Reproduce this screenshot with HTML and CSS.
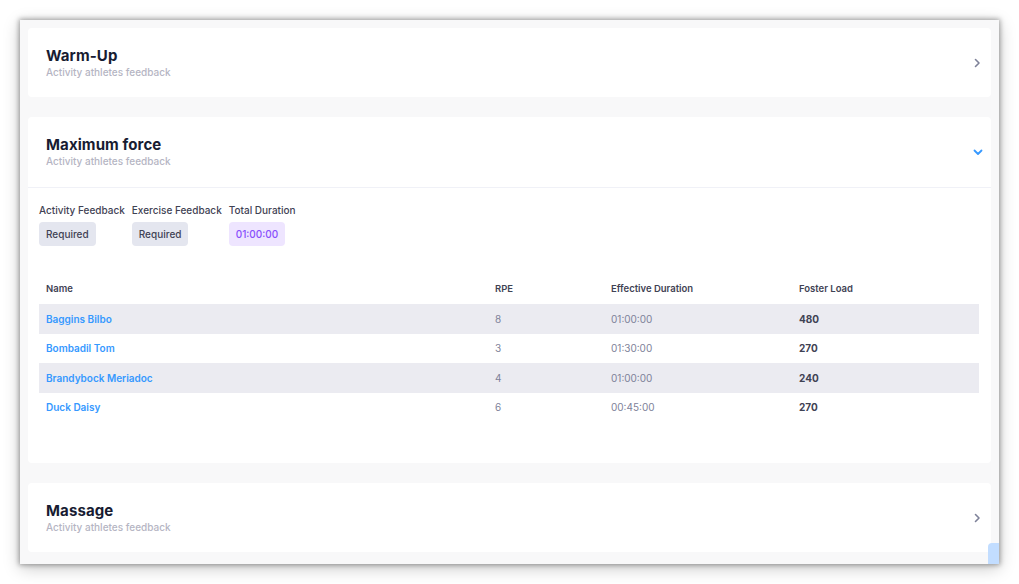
FILE: index.html
```html
<!DOCTYPE html>
<html>
<head>
<meta charset="utf-8">
<link rel="stylesheet" href="styles.css">
</head>
<body>
<div class="frame">
  <div class="content">
    <section class="card">
      <div class="card-head">
        <div class="head-text">
          <div class="title">Warm-Up</div>
          <div class="subtitle">Activity athletes feedback</div>
        </div>
        <svg class="chev" width="8" height="10" viewBox="0 0 8 10"><path d="M2.5 1.5 L6 5 L2.5 8.5" fill="none" stroke="#7e8299" stroke-width="1.6" stroke-linecap="round" stroke-linejoin="round"/></svg>
      </div>
    </section>

    <section class="card">
      <div class="card-head open">
        <div class="head-text">
          <div class="title">Maximum force</div>
          <div class="subtitle">Activity athletes feedback</div>
        </div>
        <svg class="chev down" width="10" height="8" viewBox="0 0 10 8"><path d="M1.5 2.5 L5 6 L8.5 2.5" fill="none" stroke="#3699ff" stroke-width="1.8" stroke-linecap="round" stroke-linejoin="round"/></svg>
      </div>
      <div class="card-body">
        <div class="meta">
          <div class="meta-item">
            <div class="meta-label">Activity Feedback</div>
            <span class="badge">Required</span>
          </div>
          <div class="meta-item">
            <div class="meta-label">Exercise Feedback</div>
            <span class="badge">Required</span>
          </div>
          <div class="meta-item">
            <div class="meta-label">Total Duration</div>
            <span class="badge purple">01:00:00</span>
          </div>
        </div>
        <table class="tbl">
          <colgroup>
            <col class="c-name"><col class="c-rpe"><col class="c-dur"><col class="c-load">
          </colgroup>
          <thead>
            <tr><th>Name</th><th>RPE</th><th>Effective Duration</th><th>Foster Load</th></tr>
          </thead>
          <tbody>
            <tr class="alt"><td class="name">Baggins Bilbo</td><td>8</td><td>01:00:00</td><td class="load">480</td></tr>
            <tr><td class="name">Bombadil Tom</td><td>3</td><td>01:30:00</td><td class="load">270</td></tr>
            <tr class="alt"><td class="name">Brandybock Meriadoc</td><td>4</td><td>01:00:00</td><td class="load">240</td></tr>
            <tr><td class="name">Duck Daisy</td><td>6</td><td>00:45:00</td><td class="load">270</td></tr>
          </tbody>
        </table>
      </div>
    </section>

    <section class="card">
      <div class="card-head">
        <div class="head-text">
          <div class="title">Massage</div>
          <div class="subtitle">Activity athletes feedback</div>
        </div>
        <svg class="chev" width="8" height="10" viewBox="0 0 8 10"><path d="M2.5 1.5 L6 5 L2.5 8.5" fill="none" stroke="#7e8299" stroke-width="1.6" stroke-linecap="round" stroke-linejoin="round"/></svg>
      </div>
    </section>
  </div>
  <div class="scrolltop"></div>
</div>
</body>
</html>
```

FILE: styles.css
```css
* { box-sizing: border-box; }
html, body { margin: 0; padding: 0; background: #ffffff; }
body {
  font-family: Inter, "Noto Sans", "Liberation Sans", sans-serif;
  width: 1019px;
  height: 584px;
  overflow: hidden;
}
.frame {
  position: relative;
  margin: 20px 0 0 20px;
  width: 979px;
  height: 544px;
  background: #f8f8f9;
  overflow: hidden;
  box-shadow: 0 0 5px 1px rgba(0,0,0,0.35), 0 4px 16px rgba(0,0,0,0.22);
}
.content {
  padding: 8px 8px 0 8px;
  display: flex;
  flex-direction: column;
  gap: 20px;
}
.card {
  background: #ffffff;
  border-radius: 4px;
}
.card-head {
  height: 69px;
  display: flex;
  align-items: center;
  justify-content: space-between;
  padding: 0 10px 0 18px;
}
.card-head.open {
  height: 71px;
  border-bottom: 1px solid #f0f1f7;
  padding-right: 8px;
}
.head-text { display: flex; flex-direction: column; }
.title {
  font-size: 15px;
  font-weight: 700;
  line-height: 18px;
  color: #181c32;
  letter-spacing: 0.1px;
}
.subtitle {
  font-size: 10px;
  line-height: 14px;
  color: #b5b5c3;
  font-weight: 500;
}
.chev { display: block; }
.card-body {
  padding: 15px 12px 41px 11px;
}
.meta { display: flex; gap: 7px; }
.meta-item { display: flex; flex-direction: column; align-items: flex-start; gap: 5px; }
.meta-label {
  font-size: 10px;
  line-height: 14px;
  color: #3f4254;
  font-weight: 500;
}
.badge {
  display: inline-block;
  height: 24px;
  line-height: 24px;
  padding: 0 7px;
  border-radius: 4px;
  background: #e4e6ef;
  color: #3f4254;
  font-size: 10px;
  font-weight: 500;
}
.badge.purple { background: #eee5ff; color: #8950fc; }
.tbl {
  width: 940px;
  margin-top: 26px;
  border-collapse: collapse;
  table-layout: fixed;
}
.c-name { width: 449px; }
.c-rpe { width: 116px; }
.c-dur { width: 188px; }
.c-load { width: 187px; }
.tbl th {
  text-align: left;
  font-size: 9.5px;
  font-weight: 600;
  color: #3f4254;
  height: 32px;
  padding: 0 7px;
  vertical-align: middle;
}
.tbl td {
  height: 29.5px;
  padding: 0 7px;
  font-size: 10px;
  color: #7e8299;
  vertical-align: middle;
}
.tbl tr.alt td { background: #ebebf1; }
.tbl td.name { color: #3699ff; font-weight: 600; }
.tbl td.load { color: #3f4254; font-weight: 700; }
.scrolltop {
  position: absolute;
  left: 968px;
  top: 523px;
  width: 26px;
  height: 26px;
  border-radius: 4px;
  background: #c2ddff;
}
```
